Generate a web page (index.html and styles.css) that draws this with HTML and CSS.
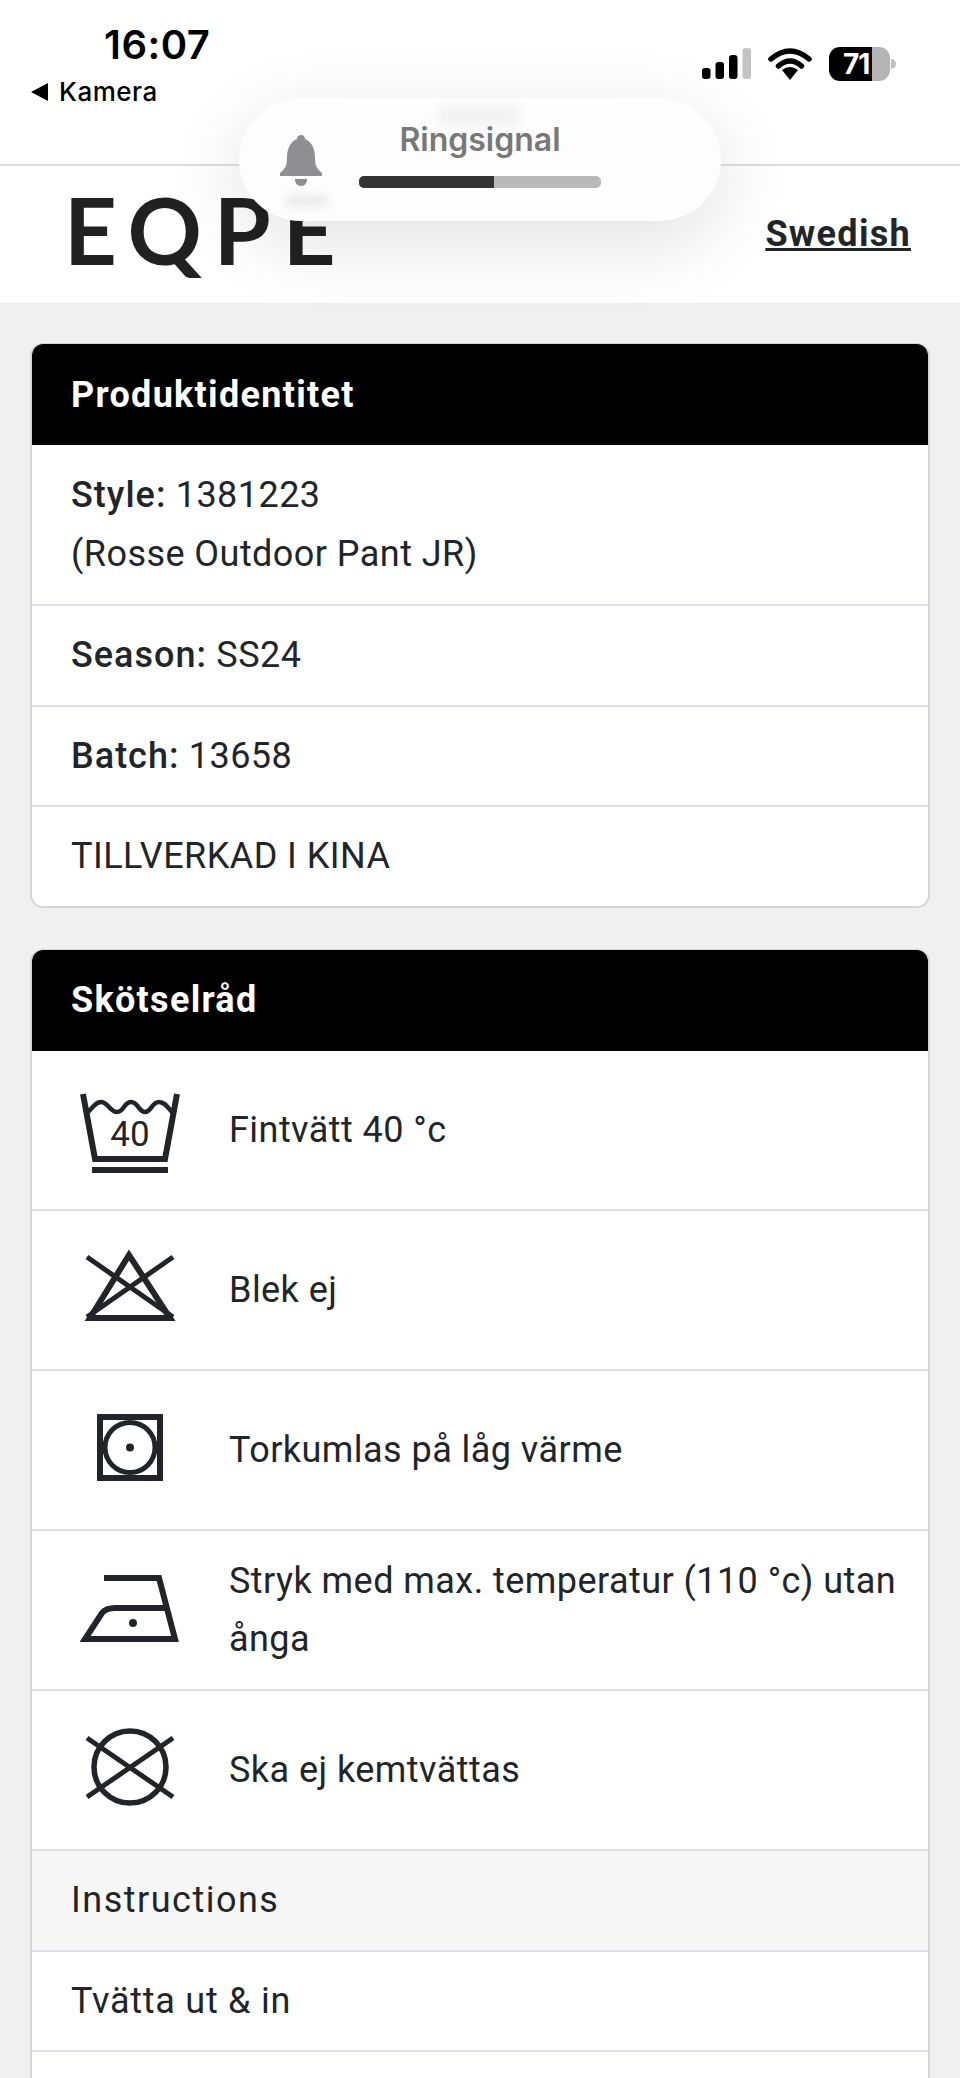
FILE: index.html
```html
<!DOCTYPE html>
<html lang="sv">
<head>
<meta charset="utf-8">
<title>EQPE</title>
<link rel="stylesheet" href="styles.css">
</head>
<body>
<div class="statusbar">
  <div class="status-left">
    <div class="time">16:07</div>
    <div class="back"><span class="back-arrow"></span><span>Kamera</span></div>
  </div>
  <div class="status-right">
    <svg class="signal" width="50" height="32" viewBox="0 0 50 32"><rect x="0" y="20" width="8.5" height="11" rx="3" fill="#000"/><rect x="13.5" y="14" width="8.5" height="17" rx="3" fill="#000"/><rect x="27" y="7" width="8.5" height="24" rx="3" fill="#000"/><rect x="40.5" y="0" width="8.5" height="31" rx="3" fill="#c4c4c4"/></svg>
    <svg class="wifi" width="44" height="32" viewBox="0 0 44 32"><path d="M3 11 Q22 -5 41 11" fill="none" stroke="#000" stroke-width="5.5" stroke-linecap="round"/><path d="M10.5 18 Q22 8 33.5 18" fill="none" stroke="#000" stroke-width="5.5" stroke-linecap="round"/><path d="M14 22 Q22 16 30 22 L22 32 Z" fill="#000"/></svg>
    <div class="battery"><div class="battery-body"><span class="battery-num">71</span></div><span class="battery-nub"></span></div>
  </div>
</div>

<header class="topbar">
  <div class="logo">EQPE</div>
  <a class="lang" href="#">Swedish</a>
</header>

<div class="hud">
  <span class="hud-ghost"></span>
  <span class="hud-ghost2"></span>
  <svg class="bell" width="44" height="52" viewBox="0 0 44 52"><path d="M22 0 C24.5 0 26 1.5 26 4 C33 7 36 14 36 23 C36 31 38 34 43 38 V41 H1 V38 C6 34 8 31 8 23 C8 14 11 7 18 4 C18 1.5 19.500 0 22 0 Z" fill="#8e8e93"/><path d="M16 44 H28 C28 48 26 51 22 51 C18 51 16 48 16 44 Z" fill="#8e8e93"/></svg>
  <div class="hud-body">
    <div class="hud-label">Ringsignal</div>
    <div class="hud-track"><div class="hud-fill"></div></div>
  </div>
</div>

<main class="page">
  <section class="card">
    <h2 class="card-head">Produktidentitet</h2>
    <div class="row"><span class="label">Style:</span> 1381223<br>(Rosse Outdoor Pant JR)</div>
    <div class="row"><span class="label">Season:</span> SS24</div>
    <div class="row"><span class="label">Batch:</span> 13658</div>
    <div class="row">TILLVERKAD I KINA</div>
  </section>

  <section class="card">
    <h2 class="card-head">Skötselråd</h2>
    <div class="row care">
      <svg class="care-icon" width="100" height="100" viewBox="0 0 100 100" fill="none" stroke="#212529"><path d="M3 14 L15 79 H85 L97 14" stroke-width="6"/><path d="M7 33 C13 27 16 22 21 22 C28 22 30 32 37 32 C44 32 44 22 51 22 C58 22 59 32 65 32 C71 32 72 22 79 22 C85 22 88 28 93 33" stroke-width="4.500"/><path d="M12 90 H88" stroke-width="6"/><text class="wash-num" x="50" y="66" text-anchor="middle">40</text></svg>
      <span>Fintvätt 40 °c</span>
    </div>
    <div class="row care">
      <svg class="care-icon" width="100" height="100" viewBox="0 0 100 100" fill="none" stroke="#212529"><path d="M49 15 L10 78 H90 Z" stroke-width="6"/><path d="M7 17 L93 77 M93 17 L7 77" stroke-width="5"/></svg>
      <span>Blek ej</span>
    </div>
    <div class="row care">
      <svg class="care-icon" width="100" height="100" viewBox="0 0 100 100" fill="none" stroke="#212529"><rect x="20" y="17" width="60" height="61" stroke-width="6"/><circle cx="50" cy="47.500" r="25" stroke-width="5"/><circle cx="50" cy="47.500" r="4" fill="#212529" stroke="none"/></svg>
      <span>Torkumlas på låg värme</span>
    </div>
    <div class="row care">
      <svg class="care-icon" width="100" height="100" viewBox="0 0 100 100" fill="none" stroke="#212529"><path d="M24 18 H79 L95 79 H5 L22 53 Q26 48 35 48 H87" stroke-width="6"/><circle cx="53" cy="63" r="4" fill="#212529" stroke="none"/></svg>
      <span>Stryk med max. temperatur (110 °c) utan ånga</span>
    </div>
    <div class="row care">
      <svg class="care-icon" width="100" height="100" viewBox="0 0 100 100" fill="none" stroke="#212529"><circle cx="50" cy="47" r="36" stroke-width="5.500"/><path d="M7 18 L93 77 M93 18 L7 77" stroke-width="5"/></svg>
      <span>Ska ej kemtvättas</span>
    </div>
    <div class="row row-sub">Instructions</div>
    <div class="row row-wide">Tvätta ut &amp; in</div>
    <div class="row">&nbsp;</div>
  </section>
</main>
</body>
</html>
```

FILE: styles.css
```css
* { box-sizing: border-box; }
html, body { margin: 0; padding: 0; }
body {
  position: relative;
  width: 960px;
  height: 2078px;
  overflow: hidden;
  background: #f0f0f0;
  color: #212529;
  font-family: Roboto, "Liberation Sans", sans-serif;
}
.statusbar {
  height: 166px;
  padding: 22px 64px 0 31px;
  display: flex;
  justify-content: space-between;
  background: #fff;
  border-bottom: 2px solid #dcdcdc;
}
.status-left { display: flex; flex-direction: column; }
.time {
  margin-left: 73px;
  font-family: Inter, sans-serif;
  font-weight: 600;
  font-size: 40px;
  line-height: 46px;
  letter-spacing: 0.5px;
  color: #000;
}
.back {
  margin-top: 9px;
  display: flex;
  align-items: center;
  gap: 11px;
  font-family: Inter, sans-serif;
  font-weight: 500;
  font-size: 26px;
  line-height: 30px;
  letter-spacing: 0.5px;
  color: #000;
}
.back-arrow {
  width: 0;
  height: 0;
  border-style: solid;
  border-width: 9px 17px 9px 0;
  border-color: transparent #000 transparent transparent;
}
.status-right {
  display: flex;
  align-items: flex-start;
  padding-top: 26px;
}
.signal { margin-left: 0; }
.wifi { margin-left: 16px; }
.battery { margin-left: 17px; display: flex; align-items: center; height: 34px; margin-top: -1px; }
.battery-body {
  width: 61px;
  height: 34px;
  border-radius: 11px;
  background: linear-gradient(to right, #000 43px, #b4b4b4 43px);
  display: flex;
  align-items: center;
  padding-left: 14px;
}
.battery-num {
  font-family: Inter, sans-serif;
  font-weight: 700;
  font-size: 28px;
  line-height: 34px;
  letter-spacing: -1px;
  color: #fff;
}
.battery-nub {
  width: 5px;
  height: 10px;
  border-radius: 0 5px 5px 0;
  background: #bdbdbd;
  margin-left: 1px;
}
.topbar {
  height: 137px;
  padding: 0 49px 0 64px;
  display: flex;
  align-items: center;
  justify-content: space-between;
  background: #fff;
}
.logo {
  font-family: Lato, sans-serif;
  font-weight: 700;
  font-size: 92px;
  line-height: 100px;
  letter-spacing: 12px;
  margin-bottom: 9px;
  color: #212121;
}
.lang {
  font-weight: 700;
  font-size: 36px;
  line-height: 44px;
  letter-spacing: 1.3px;
  color: #212529;
  text-decoration: underline;
  margin-bottom: 2px;
}
.hud {
  position: absolute;
  left: 239px;
  top: 98px;
  width: 482px;
  height: 123px;
  border-radius: 62px;
  background: #fdfdfd;
  box-shadow: 0 20px 80px rgba(0, 0, 0, 0.12);
  display: flex;
  align-items: flex-start;
  padding: 37px 0 0 40px;
}
.hud-ghost {
  position: absolute;
  left: 200px;
  top: 10px;
  width: 80px;
  height: 16px;
  background: #f0f0f0;
  filter: blur(6px);
}
.hud-ghost2 {
  position: absolute;
  left: 48px;
  top: 98px;
  width: 40px;
  height: 10px;
  background: #e6e6e6;
  filter: blur(5px);
}
.bell { position: relative; flex: none; }
.hud-body {
  position: relative;
  margin-left: 36px;
  margin-top: -13px;
  width: 242px;
}
.hud-label {
  font-family: Inter, sans-serif;
  font-weight: 600;
  font-size: 32px;
  line-height: 36px;
  text-align: center;
  color: #787878;
}
.hud-track {
  margin-top: 18px;
  height: 12px;
  border-radius: 5px;
  overflow: hidden;
  background: #b9b9b9;
}
.hud-fill { width: 135px; height: 100%; background: #333; }
.page {
  padding: 40px 30px 0;
}
.card {
  background: #fff;
  border: 2px solid #d6d6d6;
  border-top-width: 1px;
  border-radius: 13px;
  overflow: hidden;
  margin-bottom: 41px;
}
.card-head {
  margin: 0;
  height: 101px;
  padding: 0 39px;
  display: flex;
  align-items: center;
  background: #000;
  color: #fff;
  font-weight: 700;
  font-size: 36px;
  line-height: 58px;
  letter-spacing: 1.3px;
}
.row {
  padding: 20px 20px 20px 39px;
  font-size: 36px;
  line-height: 58.500px;
  letter-spacing: 0.45px;
  border-top: 2px solid #dee2e6;
}
.card-head + .row { border-top: 0; padding-top: 21px; padding-bottom: 21px; }
.label { font-weight: 500; letter-spacing: 1px; }
.care {
  min-height: 160px;
  padding: 20px 20px 20px 48px;
  display: flex;
  align-items: center;
  gap: 49px;
}
.card-head + .care { min-height: 158.500px; }
.care-icon { flex: none; }
.wash-num {
  font-family: Roboto, sans-serif;
  font-weight: 400;
  font-size: 35px;
  letter-spacing: 0;
  fill: #212529;
  stroke: none;
}
.row-sub { background: #f7f7f7; letter-spacing: 1.5px; }
.row-wide { letter-spacing: 0.75px; }
```
